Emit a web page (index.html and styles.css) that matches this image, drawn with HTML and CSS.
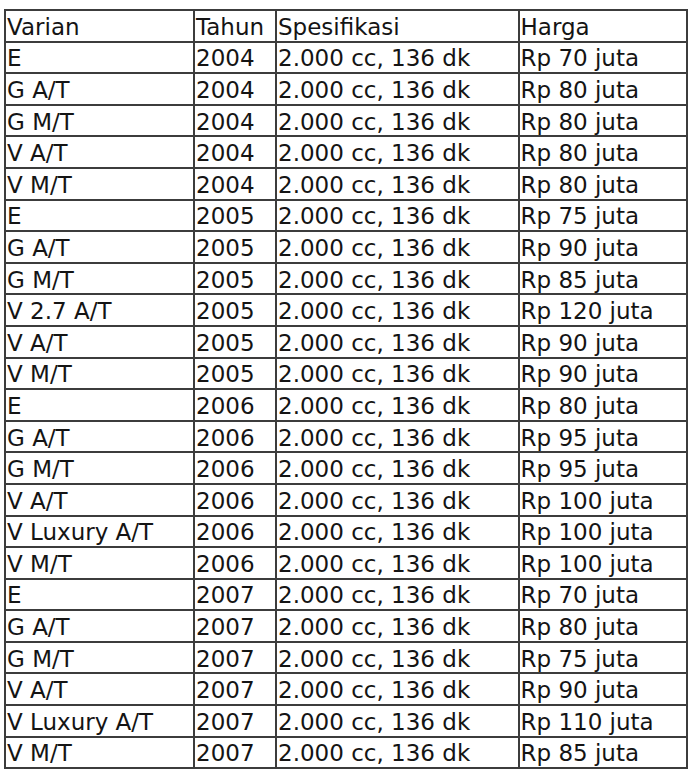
FILE: index.html
```html
<!DOCTYPE html>
<html>
<head>
<meta charset="utf-8">
<link rel="stylesheet" href="styles.css">
</head>
<body>
<table class="price-table">
<colgroup>
<col class="c-varian"><col class="c-tahun"><col class="c-spec"><col class="c-harga">
</colgroup>
<tr><td>Varian</td><td>Tahun</td><td>Spesifikasi</td><td>Harga</td></tr>
<tr><td>E</td><td>2004</td><td>2.000 cc, 136 dk</td><td>Rp 70 juta</td></tr>
<tr><td>G A/T</td><td>2004</td><td>2.000 cc, 136 dk</td><td>Rp 80 juta</td></tr>
<tr><td>G M/T</td><td>2004</td><td>2.000 cc, 136 dk</td><td>Rp 80 juta</td></tr>
<tr><td>V A/T</td><td>2004</td><td>2.000 cc, 136 dk</td><td>Rp 80 juta</td></tr>
<tr><td>V M/T</td><td>2004</td><td>2.000 cc, 136 dk</td><td>Rp 80 juta</td></tr>
<tr><td>E</td><td>2005</td><td>2.000 cc, 136 dk</td><td>Rp 75 juta</td></tr>
<tr><td>G A/T</td><td>2005</td><td>2.000 cc, 136 dk</td><td>Rp 90 juta</td></tr>
<tr><td>G M/T</td><td>2005</td><td>2.000 cc, 136 dk</td><td>Rp 85 juta</td></tr>
<tr><td>V 2.7 A/T</td><td>2005</td><td>2.000 cc, 136 dk</td><td>Rp 120 juta</td></tr>
<tr><td>V A/T</td><td>2005</td><td>2.000 cc, 136 dk</td><td>Rp 90 juta</td></tr>
<tr><td>V M/T</td><td>2005</td><td>2.000 cc, 136 dk</td><td>Rp 90 juta</td></tr>
<tr><td>E</td><td>2006</td><td>2.000 cc, 136 dk</td><td>Rp 80 juta</td></tr>
<tr><td>G A/T</td><td>2006</td><td>2.000 cc, 136 dk</td><td>Rp 95 juta</td></tr>
<tr><td>G M/T</td><td>2006</td><td>2.000 cc, 136 dk</td><td>Rp 95 juta</td></tr>
<tr><td>V A/T</td><td>2006</td><td>2.000 cc, 136 dk</td><td>Rp 100 juta</td></tr>
<tr><td>V Luxury A/T</td><td>2006</td><td>2.000 cc, 136 dk</td><td>Rp 100 juta</td></tr>
<tr><td>V M/T</td><td>2006</td><td>2.000 cc, 136 dk</td><td>Rp 100 juta</td></tr>
<tr><td>E</td><td>2007</td><td>2.000 cc, 136 dk</td><td>Rp 70 juta</td></tr>
<tr><td>G A/T</td><td>2007</td><td>2.000 cc, 136 dk</td><td>Rp 80 juta</td></tr>
<tr><td>G M/T</td><td>2007</td><td>2.000 cc, 136 dk</td><td>Rp 75 juta</td></tr>
<tr><td>V A/T</td><td>2007</td><td>2.000 cc, 136 dk</td><td>Rp 90 juta</td></tr>
<tr><td>V Luxury A/T</td><td>2007</td><td>2.000 cc, 136 dk</td><td>Rp 110 juta</td></tr>
<tr><td>V M/T</td><td>2007</td><td>2.000 cc, 136 dk</td><td>Rp 85 juta</td></tr>
</table>
</body>
</html>
```
FILE: styles.css
```css
html, body {
  margin: 0;
  padding: 0;
  background: #ffffff;
}

.price-table {
  margin: 9px 0 0 4px;
  width: 684px;
  table-layout: fixed;
  border-collapse: collapse;
  font-family: "DejaVu Sans", Verdana, sans-serif;
  font-size: 23px;
  color: #141414;
}

.c-varian { width: 189px; }
.c-tahun { width: 82px; }
.c-spec { width: 242.5px; }
.c-harga { width: 168.5px; }

.price-table td {
  border: 2px solid #3c3c3c;
  height: 31.6px;
  padding: 2px 1px 0 1px;
  box-sizing: border-box;
  line-height: 26px;
  white-space: nowrap;
  overflow: hidden;
  vertical-align: middle;
}
```
